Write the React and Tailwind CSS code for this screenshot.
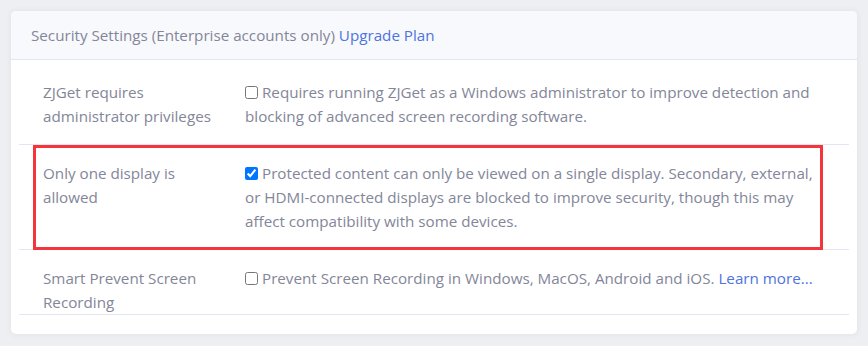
import React from "react";

const rows = [
  {
    label: "ZJGet requires administrator privileges",
    text: "Requires running ZJGet as a Windows administrator to improve detection and blocking of advanced screen recording software.",
    checked: false,
  },
  {
    label: "Only one display is allowed",
    text: "Protected content can only be viewed on a single display. Secondary, external, or HDMI-connected displays are blocked to improve security, though this may affect compatibility with some devices.",
    checked: true,
    highlight: true,
  },
  {
    label: "Smart Prevent Screen Recording",
    text: "Prevent Screen Recording in Windows, MacOS, Android and iOS.",
    checked: false,
    link: "Learn more...",
  },
];

const App = () => {
  return (
    <div
      className="min-h-screen bg-[#eeeff3] p-[11px] text-[#838699] text-[15.2px] leading-6"
      style={{ fontFamily: '"Open Sans", "Noto Sans", sans-serif' }}
    >
      <div className="w-[846px] bg-white rounded-[5px] shadow-[0_0_6px_rgba(58,59,69,0.08)] overflow-hidden">
        {/* HEADER */}
        <div className="h-[49px] px-5 flex items-center bg-[#f8f9fc] border-b border-[#e3e6f0]">
          <span>
            Security Settings (Enterprise accounts only){" "}
            <a href="#" className="text-[#4e73df]">
              Upgrade Plan
            </a>
          </span>
        </div>

        {/* BODY */}
        <div className="px-2 pt-[4px] pb-[19px]">
          <div className="h-[251px] overflow-hidden border-b border-[#e3e6f0]">
            {rows.map((row, i) => (
              <div
                key={i}
                className="relative flex border-b border-[#e3e6f0] py-4"
              >
                <div className="w-[214px] shrink-0 pl-6 pr-3">{row.label}</div>
                <div className="flex-1 pl-3 pr-[30px]">
                  <input
                    type="checkbox"
                    defaultChecked={row.checked}
                    className="mr-1 align-[-1px]"
                  />
                  {row.text}
                  {row.link && (
                    <>
                      {" "}
                      <a href="#" className="text-[#4e73df]">
                        {row.link}
                      </a>
                    </>
                  )}
                </div>
                {row.highlight && (
                  <div className="absolute left-[14px] right-[26px] top-0 -bottom-px border-[3px] border-[#f4363c] pointer-events-none" />
                )}
              </div>
            ))}
          </div>
        </div>
      </div>
    </div>
  );
};

export default App;
